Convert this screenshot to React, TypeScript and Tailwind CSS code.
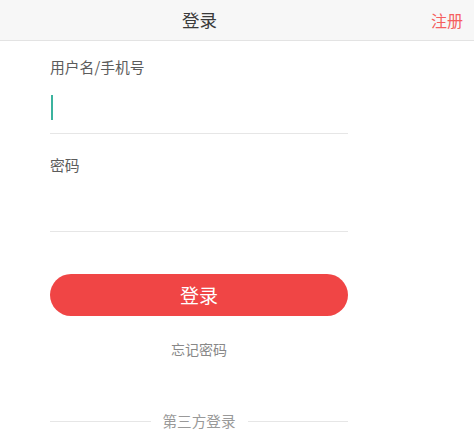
import React from "react";

const FONT = "font-['Noto_Sans_CJK_SC','Noto_Sans',sans-serif]";

function Field({ label, focused }: { label: string; focused?: boolean }) {
  return (
    <div>
      <div className="h-[20px] text-[14.8px] leading-[20px] text-[#5c5c5c]">{label}</div>
      <div className="flex h-[57px] items-center border-b border-[#e6e6e6]">
        {focused && <span className="ml-[1px] mt-[4px] h-[25px] w-[2px] bg-[#3bb39e]" />}
      </div>
    </div>
  );
}

export default function App() {
  return (
    <div className={`min-h-[440px] w-[474px] bg-white ${FONT}`}>
      <header className="flex h-[41px] items-center border-b border-[#e3e3e3] bg-[#f7f7f7]">
        <div className="w-[399px] text-center text-[17.5px] leading-[24px] text-[#3a3a3a]">登录</div>
        <button type="button" className="ml-auto pr-[11px] text-[16px] leading-[24px] text-[#f55f5f]">
          注册
        </button>
      </header>

      <div className="ml-[50px] w-[298px] pt-[16px]">
        <Field label="用户名/手机号" focused />
        <div className="mt-[21px]">
          <Field label="密码" />
        </div>

        <button
          type="button"
          className="mt-[42px] flex h-[42px] w-full items-center justify-center rounded-full bg-[#f04545] text-[19px] text-white"
        >
          登录
        </button>

        <div className="mt-[23px] text-center text-[14px] leading-[20px] text-[#888]">忘记密码</div>

        <div className="mt-[52px] flex items-center gap-[12px]">
          <div className="h-px flex-1 bg-[#e6e6e6]" />
          <span className="text-[14.6px] leading-[20px] text-[#999]">第三方登录</span>
          <div className="h-px flex-1 bg-[#e6e6e6]" />
        </div>
      </div>
    </div>
  );
}
